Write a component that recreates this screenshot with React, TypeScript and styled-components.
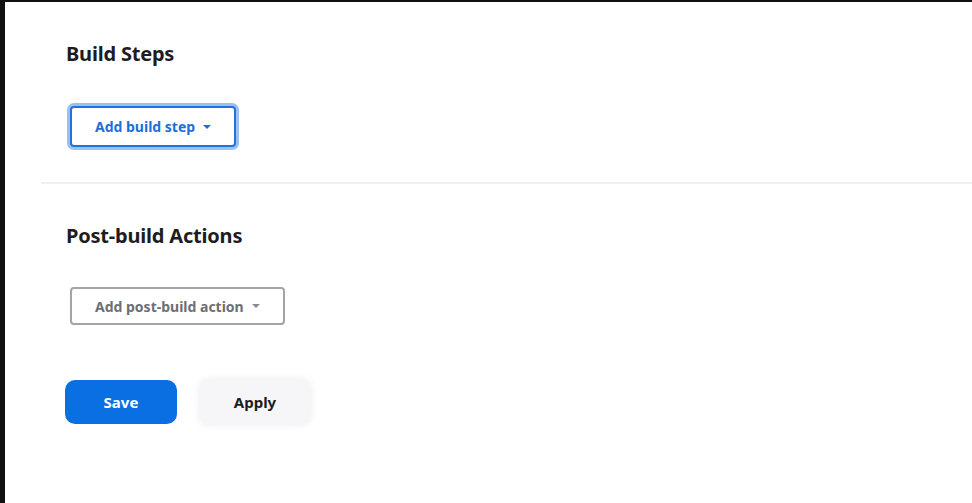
import React from "react";
import styled, { createGlobalStyle } from "styled-components";

const Global = createGlobalStyle`
  html, body { margin: 0; padding: 0; background: #ffffff; }
  body { font-family: "Noto Sans", "Open Sans", sans-serif; }
`;

const Frame = styled.div`
  box-sizing: border-box;
  width: 972px;
  height: 503px;
  border-left: 5px solid #111111;
  border-top: 2px solid #111111;
  background: #ffffff;
  display: flex;
  flex-direction: column;
  overflow: hidden;
`;

const Section = styled.section<{ $top: number; $bottom: number; $divider?: boolean }>`
  padding: ${(p) => p.$top}px 0 ${(p) => p.$bottom}px 0;
  margin-left: 36px;
  border-bottom: ${(p) => (p.$divider ? "2px solid #f0f0f2" : "none")};
`;

const Inner = styled.div`
  padding-left: 25px;
  display: flex;
  flex-direction: column;
  align-items: flex-start;
`;

const Heading = styled.h2<{ $gap: number }>`
  margin: 0 0 ${(p) => p.$gap}px 0;
  font-size: 20px;
  line-height: 28px;
  font-weight: 700;
  color: #1d1d1f;
  letter-spacing: -0.2px;
`;

const DropButton = styled.button<{ $active?: boolean }>`
  box-sizing: border-box;
  display: inline-flex;
  align-items: center;
  gap: 8px;
  font-family: inherit;
  font-size: 14px;
  font-weight: 700;
  background: #ffffff;
  border-radius: 4px;
  cursor: pointer;
  height: ${(p) => (p.$active ? "41px" : "38px")};
  padding: 0 ${(p) => (p.$active ? "23px" : "23px")};
  margin-left: 4px;
  color: ${(p) => (p.$active ? "#1a6fd8" : "#6e6e73")};
  border: 2px solid ${(p) => (p.$active ? "#1f73de" : "#a3a3a8")};
  box-shadow: ${(p) => (p.$active ? "0 0 0 3px rgba(31,115,222,0.45)" : "none")};
`;

const Caret = styled.span<{ $color: string }>`
  width: 0;
  height: 0;
  border-left: 4px solid transparent;
  border-right: 4px solid transparent;
  border-top: 4px solid ${(p) => p.$color};
`;

const Actions = styled.div`
  display: flex;
  gap: 23px;
  margin-top: 55px;
  margin-left: -1px;
`;

const PrimaryButton = styled.button`
  box-sizing: border-box;
  width: 112px;
  height: 44px;
  border: none;
  border-radius: 10px;
  background: #0b6fe4;
  color: #ffffff;
  font-family: inherit;
  font-size: 15px;
  font-weight: 700;
  cursor: pointer;
`;

const SecondaryButton = styled.button`
  box-sizing: border-box;
  width: 110px;
  height: 44px;
  border: none;
  border-radius: 10px;
  background: #f6f6f8;
  box-shadow: 0 0 6px 2px rgba(240, 240, 244, 0.9);
  color: #1d1d1f;
  font-family: inherit;
  font-size: 15px;
  font-weight: 700;
  cursor: pointer;
`;

export default function App() {
  return (
    <>
      <Global />
      <Frame>
        <Section $top={38} $bottom={35} $divider>
          <Inner>
            <Heading $gap={38}>Build Steps</Heading>
            <DropButton $active>
              Add build step <Caret $color="#1a6fd8" />
            </DropButton>
          </Inner>
        </Section>
        <Section $top={38} $bottom={0}>
          <Inner>
            <Heading $gap={37}>Post-build Actions</Heading>
            <DropButton>
              Add post-build action <Caret $color="#8a8a8f" />
            </DropButton>
            <Actions>
              <PrimaryButton>Save</PrimaryButton>
              <SecondaryButton>Apply</SecondaryButton>
            </Actions>
          </Inner>
        </Section>
      </Frame>
    </>
  );
}
